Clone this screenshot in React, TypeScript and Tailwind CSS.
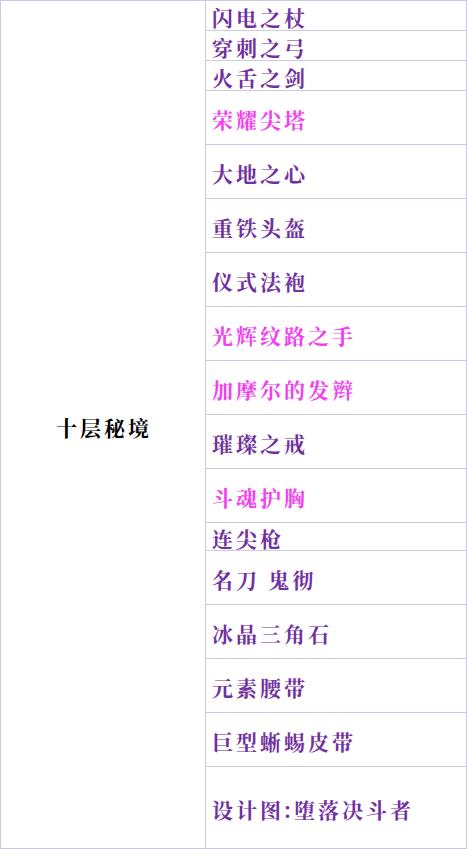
import React from "react";

type Item = { name: string; pink?: boolean; h: string };

const items: Item[] = [
  { name: "闪电之杖", h: "h-[30px]" },
  { name: "穿刺之弓", h: "h-[30px]" },
  { name: "火舌之剑", h: "h-[30px]" },
  { name: "荣耀尖塔", pink: true, h: "h-[54px]" },
  { name: "大地之心", h: "h-[54px]" },
  { name: "重铁头盔", h: "h-[54px]" },
  { name: "仪式法袍", h: "h-[54px]" },
  { name: "光辉纹路之手", pink: true, h: "h-[54px]" },
  { name: "加摩尔的发辫", pink: true, h: "h-[54px]" },
  { name: "璀璨之戒", h: "h-[54px]" },
  { name: "斗魂护胸", pink: true, h: "h-[54px]" },
  { name: "连尖枪", h: "h-[28px]" },
  { name: "名刀 鬼彻", h: "h-[54px]" },
  { name: "冰晶三角石", h: "h-[54px]" },
  { name: "元素腰带", h: "h-[54px]" },
  { name: "巨型蜥蜴皮带", h: "h-[54px]" },
  { name: "设计图:堕落决斗者", h: "h-[81px]" },
];

export default function App() {
  return (
    <div
      className="w-[467px] h-[849px] bg-white"
      style={{ fontFamily: '"Noto Serif CJK SC", "Noto Sans CJK SC", "Noto Sans", sans-serif' }}
    >
      <div className="flex w-[467px] border border-[#c9cbdf] box-border">
        <div className="w-[205px] border-r border-[#c9cbdf] flex items-center justify-center pt-[6px] pl-[2px]">
          <span className="text-[21px] font-bold tracking-[3px] text-black leading-none">
            十层秘境
          </span>
        </div>
        <div className="flex-1 flex flex-col">
          {items.map((it, i) => (
            <div
              key={i}
              className={`${it.h} box-border flex items-center pl-[6px] pt-[4px] ${
                i < items.length - 1 ? "border-b border-[#c9cbdf]" : ""
              }`}
            >
              <span
                className={`text-[21px] font-bold tracking-[3px] leading-none whitespace-pre ${
                  it.pink ? "text-[#f040f0]" : "text-[#7030a0]"
                }`}
              >
                {it.name}
              </span>
            </div>
          ))}
        </div>
      </div>
    </div>
  );
}
